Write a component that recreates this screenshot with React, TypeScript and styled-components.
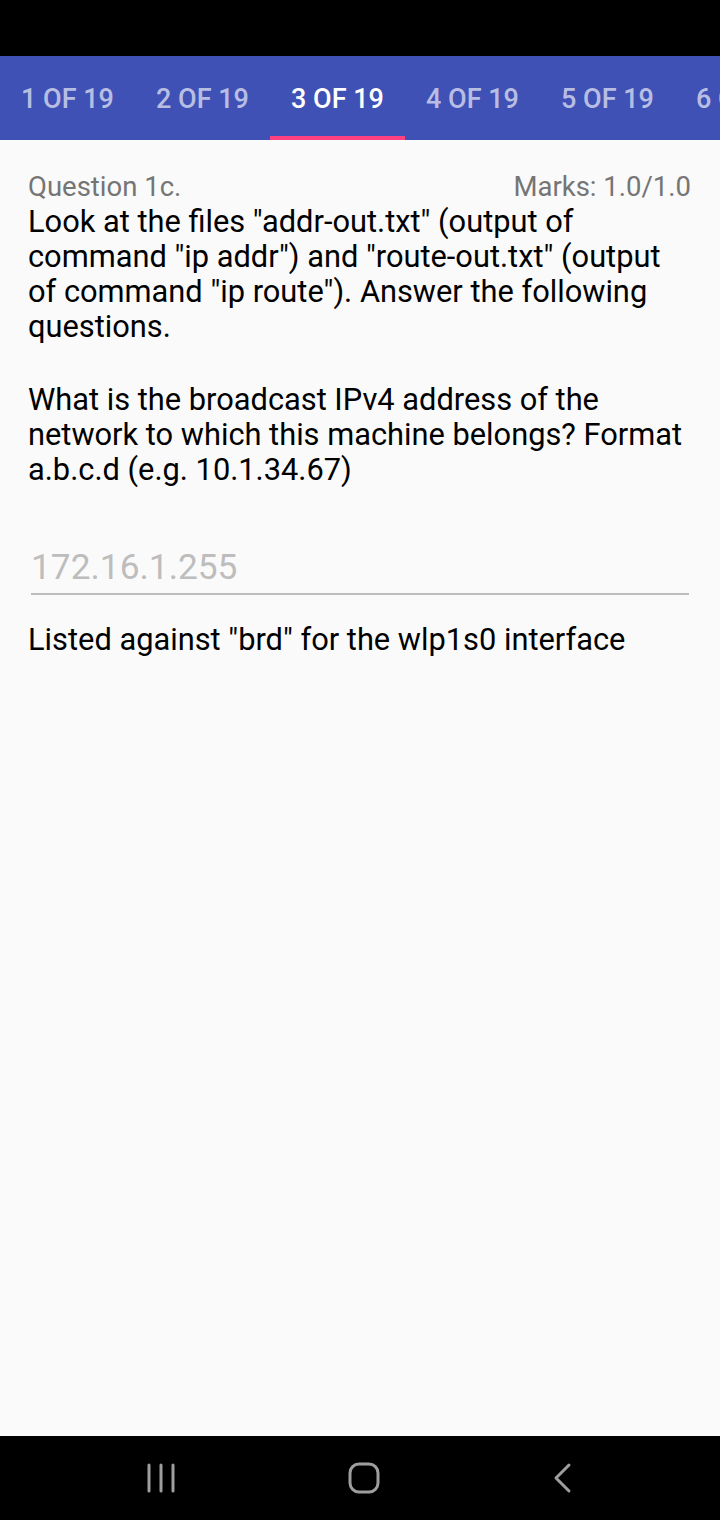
import React from "react";
import styled, { createGlobalStyle } from "styled-components";

const Global = createGlobalStyle`
  html, body { margin: 0; padding: 0; background: #fafafa; }
  body { font-family: Roboto, "Liberation Sans", sans-serif; }
  * { box-sizing: border-box; }
`;

const Screen = styled.div`
  width: 720px;
  height: 1520px;
  display: flex;
  flex-direction: column;
  background: #fafafa;
  overflow: hidden;
`;

const StatusBar = styled.div`
  height: 56px;
  background: #000;
  flex: none;
`;

const TabBar = styled.div`
  height: 84px;
  background: #3f51b5;
  display: flex;
  flex: none;
  overflow: hidden;
`;

const Tab = styled.div<{ $active?: boolean }>`
  position: relative;
  flex: none;
  width: 135px;
  display: flex;
  align-items: center;
  justify-content: center;
  font-size: 27px;
  font-weight: 500;
  color: ${(p) => (p.$active ? "#ffffff" : "rgba(255,255,255,0.65)")};
  white-space: nowrap;
  padding-top: 2px;
  &::after {
    content: "";
    display: ${(p) => (p.$active ? "block" : "none")};
    position: absolute;
    left: 0;
    right: 0;
    bottom: 0;
    height: 4px;
    background: #ff4081;
  }
`;

const Content = styled.div`
  flex: 1;
  padding: 30px 28px 0 28px;
  display: flex;
  flex-direction: column;
`;

const HeaderRow = styled.div`
  display: flex;
  justify-content: space-between;
  align-items: baseline;
  font-size: 27.5px;
  color: #757575;
  line-height: 34px;
  padding-right: 1px;
`;

const Paragraph = styled.p<{ $gap?: number }>`
  margin: ${(p) => p.$gap ?? 0}px 0 0 0;
  font-size: 30.8px;
  line-height: 35px;
  color: #000;
`;

const InputWrap = styled.div`
  margin: 60px 3px 0 3px;
  border-bottom: 2px solid #bdbdbd;
  padding-bottom: 6px;
`;

const InputText = styled.div`
  font-size: 35.3px;
  line-height: 40px;
  color: #bdbdbd;
`;

const Feedback = styled.div`
  margin-top: 27px;
  font-size: 30.8px;
  line-height: 36px;
  color: #000;
`;

const NavBar = styled.div`
  height: 84px;
  background: #000;
  flex: none;
  display: flex;
  align-items: center;
  justify-content: space-between;
  padding: 0 147px 0 146px;
`;

const NavIcon = styled.svg`
  display: block;
`;

const tabs = [1, 2, 3, 4, 5, 6];

export default function App() {
  return (
    <Screen>
      <Global />
      <StatusBar />
      <TabBar>
        {tabs.map((n) => (
          <Tab key={n} $active={n === 3}>
            {n} OF 19
          </Tab>
        ))}
      </TabBar>
      <Content>
        <HeaderRow>
          <span>Question 1c.</span>
          <span>Marks: 1.0/1.0</span>
        </HeaderRow>
        <Paragraph>
          Look at the files "addr-out.txt" (output of command "ip addr") and "route-out.txt" (output of command "ip route"). Answer the following questions.
        </Paragraph>
        <Paragraph $gap={38}>
          What is the broadcast IPv4 address of the network to which this machine belongs? Format a.b.c.d (e.g. 10.1.34.67)
        </Paragraph>
        <InputWrap>
          <InputText>172.16.1.255</InputText>
        </InputWrap>
        <Feedback>Listed against "brd" for the wlp1s0 interface</Feedback>
      </Content>
      <NavBar>
        <NavIcon width="30" height="32" viewBox="0 0 30 32">
          <g stroke="#9e9e9e" strokeWidth="3" strokeLinecap="round">
            <line x1="3" y1="3" x2="3" y2="29" />
            <line x1="15" y1="3" x2="15" y2="29" />
            <line x1="27" y1="3" x2="27" y2="29" />
          </g>
        </NavIcon>
        <NavIcon width="34" height="34" viewBox="0 0 34 34">
          <rect x="2" y="3" width="28" height="28" rx="9" fill="none" stroke="#9e9e9e" strokeWidth="3" />
        </NavIcon>
        <NavIcon width="20" height="32" viewBox="0 0 20 32">
          <polyline points="16,3 3,16 16,29" fill="none" stroke="#9e9e9e" strokeWidth="3" strokeLinecap="round" strokeLinejoin="round" />
        </NavIcon>
      </NavBar>
    </Screen>
  );
}
